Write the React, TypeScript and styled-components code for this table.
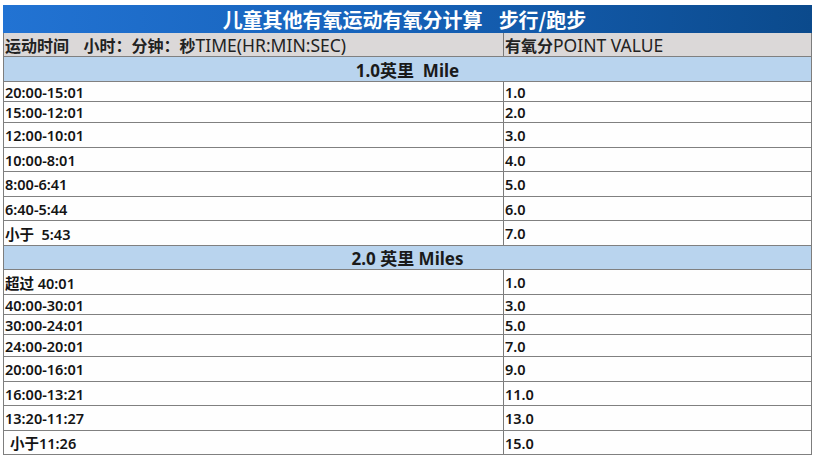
import React from "react";
import styled, { createGlobalStyle } from "styled-components";

const GlobalStyle = createGlobalStyle`
  html, body {
    margin: 0;
    padding: 0;
    background: #ffffff;
  }
  body {
    font-family: "Noto Sans", "Noto Sans CJK SC", sans-serif;
  }
`;

const Page = styled.div`
  width: 820px;
  height: 462px;
  padding: 5px 0 0 3px;
  box-sizing: border-box;
`;

const Sheet = styled.div`
  width: 809px;
  display: flex;
  flex-direction: column;
`;

const TitleBar = styled.div`
  height: 28px;
  display: flex;
  align-items: center;
  justify-content: center;
  gap: 16px;
  padding-right: 6px;
  background: linear-gradient(90deg, #2273d3 0%, #1763bb 45%, #0b4a8c 100%);
  color: #ffffff;
  font-family: "Noto Sans CJK SC", sans-serif;
  font-weight: 700;
  font-size: 20px;
  white-space: pre;
`;

const Body = styled.div`
  border-left: 1px solid #7d7d7d;
  border-right: 1px solid #7d7d7d;
  display: flex;
  flex-direction: column;
`;

const Row = styled.div<{ $h: number; $bg?: string }>`
  height: ${(p) => p.$h}px;
  box-sizing: border-box;
  display: grid;
  grid-template-columns: 499px 1fr;
  border-bottom: 1px solid #808080;
  background: ${(p) => p.$bg || "#fefefe"};
`;

const Cell = styled.div<{ $divider?: boolean; $pad?: number }>`
  display: flex;
  align-items: center;
  padding-left: ${(p) => p.$pad ?? 1}px;
  border-left: ${(p) => (p.$divider ? "1px solid #7a7a7a" : "none")};
  font-size: 14.5px;
  font-weight: 600;
  color: #141414;
  white-space: pre;
  overflow: hidden;
`;

const HeadCell = styled(Cell)`
  font-size: 17.5px;
  font-weight: 400;
  color: #222222;
  b {
    font-family: "Noto Sans CJK SC", sans-serif;
    font-size: 16px;
    font-weight: 700;
  }
`;

const SectionRow = styled.div<{ $h: number }>`
  height: ${(p) => p.$h}px;
  box-sizing: border-box;
  display: flex;
  align-items: center;
  justify-content: center;
  background: #b9d4ee;
  border-bottom: 1px solid #808080;
  font-size: 17px;
  font-weight: 700;
  color: #1a1a1a;
  white-space: pre;
  font-family: "Noto Sans", "Noto Sans CJK SC", sans-serif;
`;

type Entry = { time: string; points: string; h: number; pad?: number };

const oneMile: Entry[] = [
  { time: "20:00-15:01", points: "1.0", h: 20 },
  { time: "15:00-12:01", points: "2.0", h: 21 },
  { time: "12:00-10:01", points: "3.0", h: 25 },
  { time: "10:00-8:01", points: "4.0", h: 24 },
  { time: "8:00-6:41", points: "5.0", h: 25 },
  { time: "6:40-5:44", points: "6.0", h: 24 },
  { time: "小于  5:43", points: "7.0", h: 25 },
];

const twoMiles: Entry[] = [
  { time: "超过 40:01", points: "1.0", h: 25 },
  { time: "40:00-30:01", points: "3.0", h: 20 },
  { time: "30:00-24:01", points: "5.0", h: 20 },
  { time: "24:00-20:01", points: "7.0", h: 22 },
  { time: "20:00-16:01", points: "9.0", h: 25 },
  { time: "16:00-13:21", points: "11.0", h: 24 },
  { time: "13:20-11:27", points: "13.0", h: 25 },
  { time: "小于11:26", points: "15.0", h: 24, pad: 6 },
];

const DataRows: React.FC<{ rows: Entry[] }> = ({ rows }) => (
  <>
    {rows.map((r) => (
      <Row key={r.time} $h={r.h}>
        <Cell $pad={r.pad}>{r.time}</Cell>
        <Cell $divider>{r.points}</Cell>
      </Row>
    ))}
  </>
);

const App: React.FC = () => {
  return (
    <Page>
      <GlobalStyle />
      <Sheet>
        <TitleBar>
          <span>儿童其他有氧运动有氧分计算</span>
          <span>步行/跑步</span>
        </TitleBar>
        <Body>
          <Row $h={24} $bg="#dbd8d8">
            <HeadCell>
              <b>运动时间    小时：分钟：秒</b>TIME(HR:MIN:SEC)
            </HeadCell>
            <HeadCell $divider>
              <b>有氧分</b>POINT VALUE
            </HeadCell>
          </Row>
          <SectionRow $h={25}>1.0英里  Mile</SectionRow>
          <DataRows rows={oneMile} />
          <SectionRow $h={24}>2.0 英里 Miles</SectionRow>
          <DataRows rows={twoMiles} />
        </Body>
      </Sheet>
    </Page>
  );
};

export default App;
